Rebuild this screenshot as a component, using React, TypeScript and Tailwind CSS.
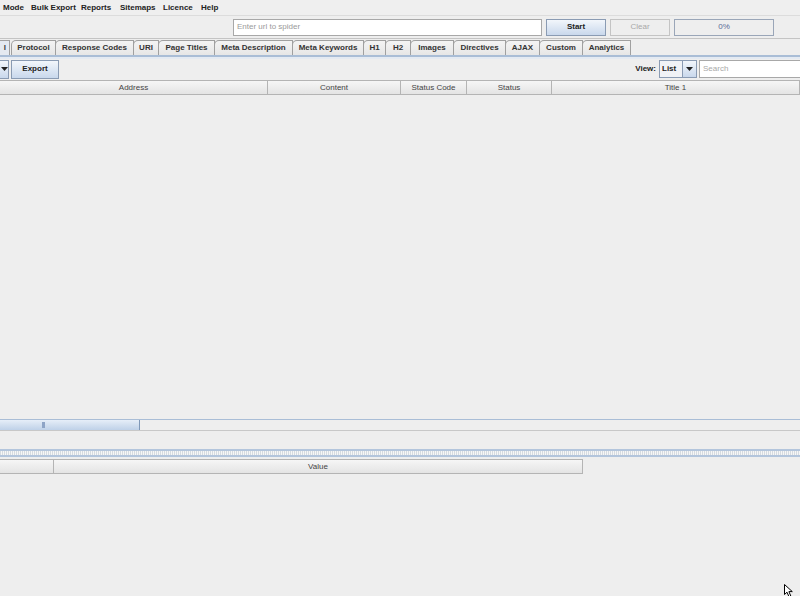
import React from 'react';

const menus: [string, number][] = [
  ['Mode', 28],
  ['Bulk Export', 50],
  ['Reports', 39],
  ['Sitemaps', 43],
  ['Licence', 38],
  ['Help', 30],
];

const tabs: [string, number][] = [
  ['Protocol', 45],
  ['Response Codes', 79],
  ['URI', 26],
  ['Page Titles', 57],
  ['Meta Description', 79],
  ['Meta Keywords', 72],
  ['H1', 23],
  ['H2', 26],
  ['Images', 44],
  ['Directives', 53],
  ['AJAX', 35],
  ['Custom', 44],
  ['Analytics', 49],
];

const cols: [string, number][] = [
  ['Address', 268],
  ['Content', 133],
  ['Status Code', 66],
  ['Status', 85],
  ['Title 1', 248],
];

function Arrow() {
  return (
    <svg width="7" height="4" viewBox="0 0 7 4">
      <path d="M0 0 H7 L3.5 4 Z" fill="#222" />
    </svg>
  );
}

function Cursor() {
  return (
    <svg className="absolute left-[784px] top-[584px]" width="12" height="14" viewBox="0 0 12 14">
      <path d="M0.5 0.5 L0.5 10.5 L3 8.2 L5 12.8 L6.8 12 L4.9 7.6 L8.3 7.6 Z" fill="#fff" stroke="#000" strokeWidth="1" />
    </svg>
  );
}

export default function App() {
  return (
    <div
      className="relative w-[800px] h-[596px] bg-[#eeeeee] flex flex-col overflow-hidden text-[8px] text-[#333] whitespace-nowrap"
      style={{ fontFamily: '"Liberation Sans", Arial, sans-serif' }}
    >
      {/* Menu bar */}
      <div className="h-[16px] flex items-center bg-[#efefef] border-b border-[#dcdcdc] pl-[3px] font-bold text-[#222] shrink-0">
        {menus.map(([m, w]) => (
          <span key={m} style={{ width: w }} className="shrink-0">
            {m}
          </span>
        ))}
      </div>

      {/* URL toolbar */}
      <div className="h-[22px] flex items-center pl-[233px] gap-[4px] shrink-0">
        <div className="w-[309px] h-[17px] bg-white border border-[#a8a8a8] flex items-center px-[3px] text-[#9a9a9a]">
          Enter url to spider
        </div>
        <div className="w-[60px] h-[17px] border border-[#8a9bb3] bg-gradient-to-b from-[#f2f6fb] to-[#c9d8ec] flex items-center justify-center font-bold text-[#222]">
          Start
        </div>
        <div className="w-[60px] h-[17px] border border-[#c4c4c4] bg-[#eeeeee] flex items-center justify-center text-[#a8a8a8]">
          Clear
        </div>
        <div className="w-[100px] h-[17px] border border-[#9aa6b8] bg-[#eeeeee] flex items-center justify-center text-[#5b6d97]">
          0%
        </div>
      </div>

      <div className="h-px bg-[#c4c4c4] shrink-0" />

      {/* Tabs */}
      <div className="h-[16px] flex items-end shrink-0">
        <div className="w-[10px] h-[15px] border-r border-t border-[#a0a0a0] bg-[#e4e9f0] flex items-center justify-end pr-[3px] font-bold">
          l
        </div>
        <div className="w-[1px]" />
        {tabs.map(([t, w]) => (
          <div
            key={t}
            style={{ width: w }}
            className="h-[15px] shrink-0 border-t border-l border-r border-[#a0a0a0] rounded-tl-[5px] bg-gradient-to-b from-[#f4f4f4] to-[#e6e6e6] flex items-center justify-center font-bold text-[#333] -mr-px"
          >
            {t}
          </div>
        ))}
      </div>
      <div className="h-[2px] bg-[#a9bdd6] shrink-0" />
      <div className="h-[2px] bg-[#e4eaf2] shrink-0" />

      {/* Export toolbar */}
      <div className="h-[20px] flex items-center shrink-0">
        <div className="w-[9px] h-[19px] border border-l-0 border-[#8a9bb3] bg-gradient-to-b from-[#f2f6fb] to-[#c9d8ec] flex items-center justify-center">
          <Arrow />
        </div>
        <div className="ml-[2px] w-[48px] h-[19px] border border-[#8a9bb3] bg-gradient-to-b from-[#f2f6fb] to-[#c9d8ec] flex items-center justify-center font-bold text-[#222]">
          Export
        </div>
        <div className="flex-1" />
        <span className="font-bold text-[#222] mr-[3px]">View:</span>
        <div className="w-[38px] h-[18px] border border-[#8a9bb3] flex">
          <div className="flex-1 bg-[#f0f2f6] flex items-center pl-[2px] font-bold text-[#222]">List</div>
          <div className="w-[14px] border-l border-[#8a9bb3] bg-gradient-to-b from-[#f2f6fb] to-[#c9d8ec] flex items-center justify-center">
            <Arrow />
          </div>
        </div>
        <div className="ml-[2px] w-[101px] h-[18px] bg-white border border-[#a8a8a8] border-r-0 flex items-center px-[3px] text-[#a8a8a8]">
          Search
        </div>
      </div>

      {/* Table header */}
      <div className="h-[15px] mt-[1px] flex border-y border-[#b4b4b4] bg-gradient-to-b from-[#f6f6f6] to-[#e4e4e4] shrink-0">
        {cols.map(([c, w]) => (
          <div
            key={c}
            style={{ width: w }}
            className="h-full border-r border-[#b4b4b4] flex items-center justify-center text-[#444] shrink-0"
          >
            {c}
          </div>
        ))}
      </div>

      {/* Empty table body */}
      <div className="h-[324px] shrink-0" />

      {/* Horizontal scrollbar */}
      <div className="h-[12px] flex border-t border-[#a9bdd6] border-b border-b-[#c8c8c8] shrink-0">
        <div className="w-[140px] h-full bg-gradient-to-b from-[#e6eef8] to-[#bfd1e8] border-r border-[#7f98b8] relative">
          <div className="absolute left-[42px] top-[2px] w-[3px] h-[6px] bg-[#8ea4c6]" />
        </div>
        <div className="flex-1 bg-[#eeeeee]" />
      </div>

      <div className="h-[18px] shrink-0" />

      {/* Split divider */}
      <div className="h-[2px] bg-[#b3c5dc] shrink-0" />
      <div
        className="h-[4px] shrink-0"
        style={{ backgroundImage: 'repeating-linear-gradient(90deg, #d6dbe0 0 1px, #f6f6f6 1px 2px)' }}
      />
      <div className="h-[2px] bg-[#b3c5dc] shrink-0" />

      {/* Lower table header */}
      <div className="h-[15px] mt-[2px] flex shrink-0">
        <div className="w-[54px] h-full border-y border-r border-[#b4b4b4] bg-gradient-to-b from-[#f6f6f6] to-[#e4e4e4]" />
        <div className="w-[529px] h-full border-y border-r border-[#b4b4b4] bg-gradient-to-b from-[#f6f6f6] to-[#e4e4e4] flex items-center justify-center text-[#444]">
          Value
        </div>
      </div>

      <Cursor />
    </div>
  );
}
